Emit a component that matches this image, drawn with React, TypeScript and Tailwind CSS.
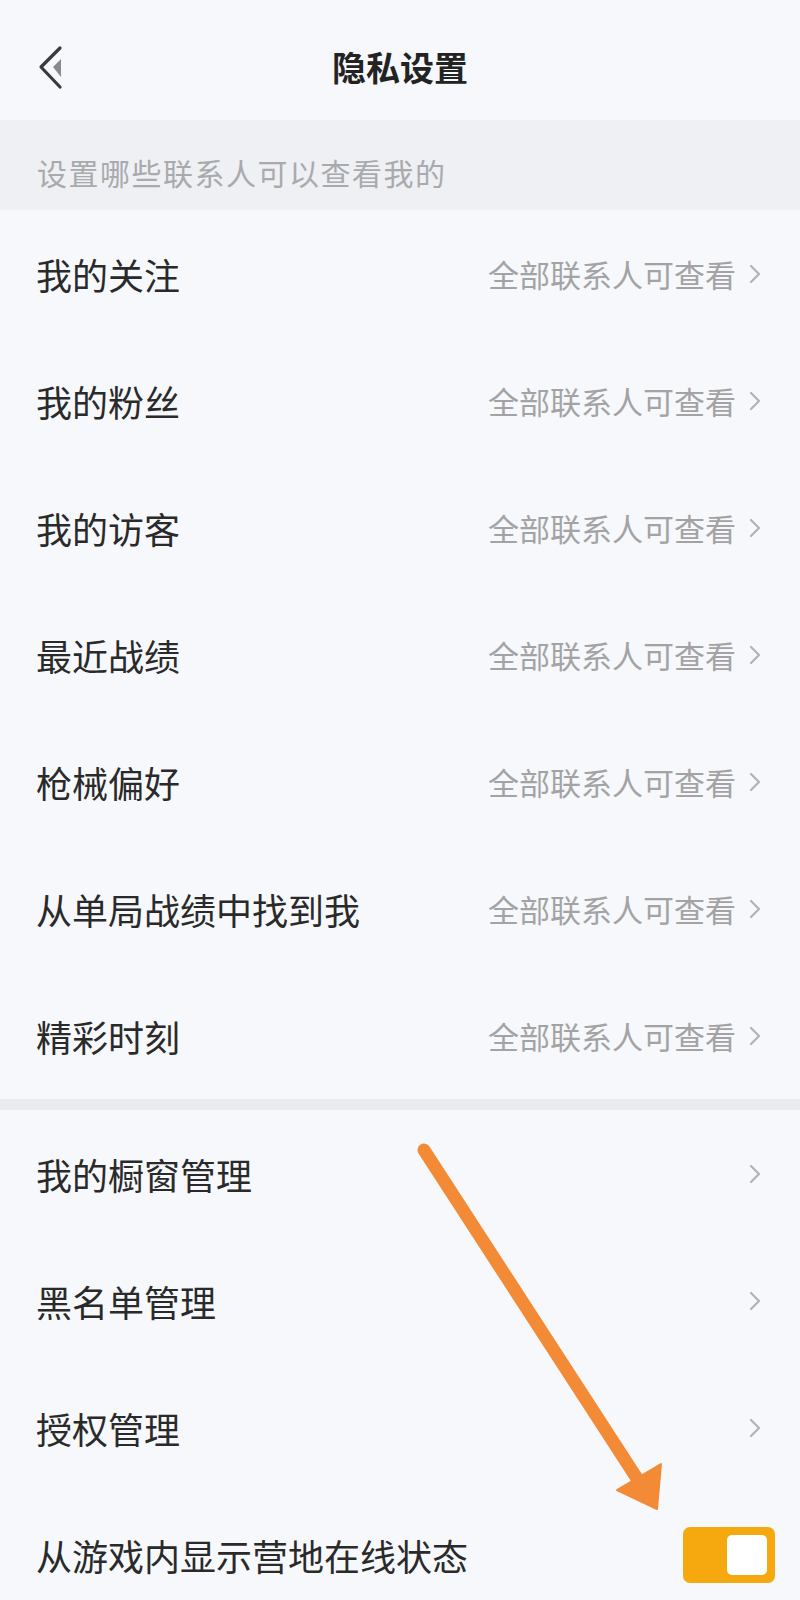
import React from "react";

const font = { fontFamily: '"Noto Sans CJK SC", "Noto Sans", sans-serif' };

function Chevron() {
  return (
    <svg width="14" height="22" viewBox="0 0 14 22" className="shrink-0">
      <path d="M3 3 L11 11 L3 19" fill="none" stroke="#b0b2b6" strokeWidth="2.2" strokeLinecap="round" strokeLinejoin="round" />
    </svg>
  );
}

function Row({ label, value, chevron = true }: { label: string; value?: string; chevron?: boolean }) {
  return (
    <div className="flex h-[127px] items-center justify-between pl-[36px] pr-[38px]">
      <span className="text-[36px] leading-none text-[#2a2a2a]">{label}</span>
      <div className="flex items-center gap-[12px]">
        {value && <span className="text-[31px] leading-none text-[#a3a3a5]">{value}</span>}
        {chevron && <Chevron />}
      </div>
    </div>
  );
}

export default function App() {
  const first = ["我的关注", "我的粉丝", "我的访客", "最近战绩", "枪械偏好", "从单局战绩中找到我", "精彩时刻"];
  const second = ["我的橱窗管理", "黑名单管理", "授权管理"];
  return (
    <div className="relative h-[1600px] w-[800px] overflow-hidden bg-[#f6f8fb]" style={font}>
      {/* header */}
      <div className="relative flex h-[120px] items-center justify-center pt-[14px]">
        <svg width="30" height="46" viewBox="0 0 30 46" className="absolute left-[36px] top-[45px]">
          <path d="M24 3 L5 22 L24 42" fill="none" stroke="#3a3a3c" strokeWidth="3.2" strokeLinecap="round" strokeLinejoin="round" />
          <path d="M25 14 L17 22 L25 32 Z" fill="#8a8a8e" />
        </svg>
        <span className="text-[34px] font-bold leading-none text-[#232323]">隐私设置</span>
      </div>
      {/* section header */}
      <div className="flex h-[90px] items-center bg-[#eef0f4] pl-[37px] pt-[14px]">
        <span className="text-[30px] leading-none tracking-[1.5px] text-[#a9aaad]">设置哪些联系人可以查看我的</span>
      </div>
      {first.map((l) => (
        <Row key={l} label={l} value="全部联系人可查看" />
      ))}
      <div className="h-[11px] bg-[#e9ebef]" />
      {second.map((l) => (
        <Row key={l} label={l} />
      ))}
      <div className="flex h-[127px] items-center justify-between pl-[36px] pr-[25px]">
        <span className="text-[36px] leading-none text-[#2a2a2a]">从游戏内显示营地在线状态</span>
        <div className="flex h-[56px] w-[92px] items-center justify-end rounded-[7px] bg-[#f5a90f] pr-[8px]">
          <div className="h-[40px] w-[40px] rounded-[5px] bg-white" />
        </div>
      </div>
      {/* annotation arrow */}
      <svg className="pointer-events-none absolute left-0 top-0" width="800" height="1600" viewBox="0 0 800 1600">
        <line x1="424" y1="1150" x2="638" y2="1480" stroke="#f38a35" strokeWidth="13" strokeLinecap="round" />
        <polygon points="617,1490 661,1464 657,1509" fill="#f38a35" strokeLinejoin="round" stroke="#f38a35" strokeWidth="2" />
      </svg>
    </div>
  );
}
